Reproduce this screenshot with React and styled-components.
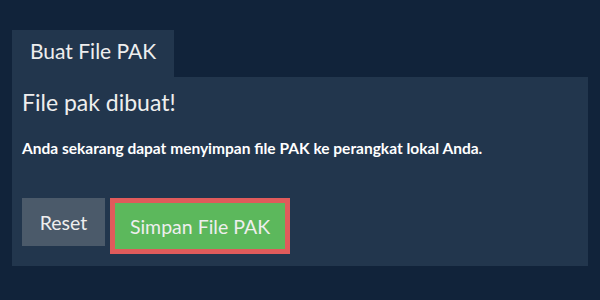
import React from "react";
import styled, { createGlobalStyle } from "styled-components";

const Global = createGlobalStyle`
  html, body { margin: 0; padding: 0; background: #11233a; }
  body { font-family: Lato, "Open Sans", sans-serif; color: #eeeeee; }
`;

const Page = styled.div`
  padding: 30px 12px 0 12px;
  width: 576px;
`;

const TabBar = styled.div`
  display: flex;
`;

const Tab = styled.div`
  background: #22364d;
  width: 162px;
  height: 47px;
  box-sizing: border-box;
  padding: 7px 0 0 18px;
  font-size: 21px;
  line-height: 28px;
  color: #eeeeee;
`;

const Panel = styled.div`
  background: #22364d;
  height: 189px;
  box-sizing: border-box;
  padding: 9px 10px;
  display: flex;
  flex-direction: column;
`;

const Title = styled.h2`
  margin: 0;
  font-weight: 400;
  font-size: 23px;
  line-height: 32px;
  color: #eeeeee;
`;

const Message = styled.p`
  margin: 20px 0 0 0;
  font-weight: 700;
  font-size: 15.5px;
  line-height: 20px;
  color: #ffffff;
`;

const Actions = styled.div`
  display: flex;
  align-items: flex-start;
  gap: 5px;
  margin-top: 40px;
`;

const Button = styled.button`
  font-family: Lato, "Open Sans", sans-serif;
  font-size: 19.5px;
  color: #eeeeee;
  border: ${(p) => (p.$highlight ? "5px solid #e05b5b" : "none")};
  background: ${(p) => (p.$primary ? "#5cb85c" : "#4b5a6a")};
  height: ${(p) => (p.$highlight ? "56px" : "48px")};
  width: ${(p) => (p.$highlight ? "180px" : "83px")};
  box-sizing: border-box;
  padding: 0;
  cursor: pointer;
  display: flex;
  align-items: center;
  justify-content: center;
`;

export default function App() {
  return (
    <>
      <Global />
      <Page>
        <TabBar>
          <Tab>Buat File PAK</Tab>
        </TabBar>
        <Panel>
          <Title>File pak dibuat!</Title>
          <Message>Anda sekarang dapat menyimpan file PAK ke perangkat lokal Anda.</Message>
          <Actions>
            <Button>Reset</Button>
            <Button $primary $highlight>Simpan File PAK</Button>
          </Actions>
        </Panel>
      </Page>
    </>
  );
}
